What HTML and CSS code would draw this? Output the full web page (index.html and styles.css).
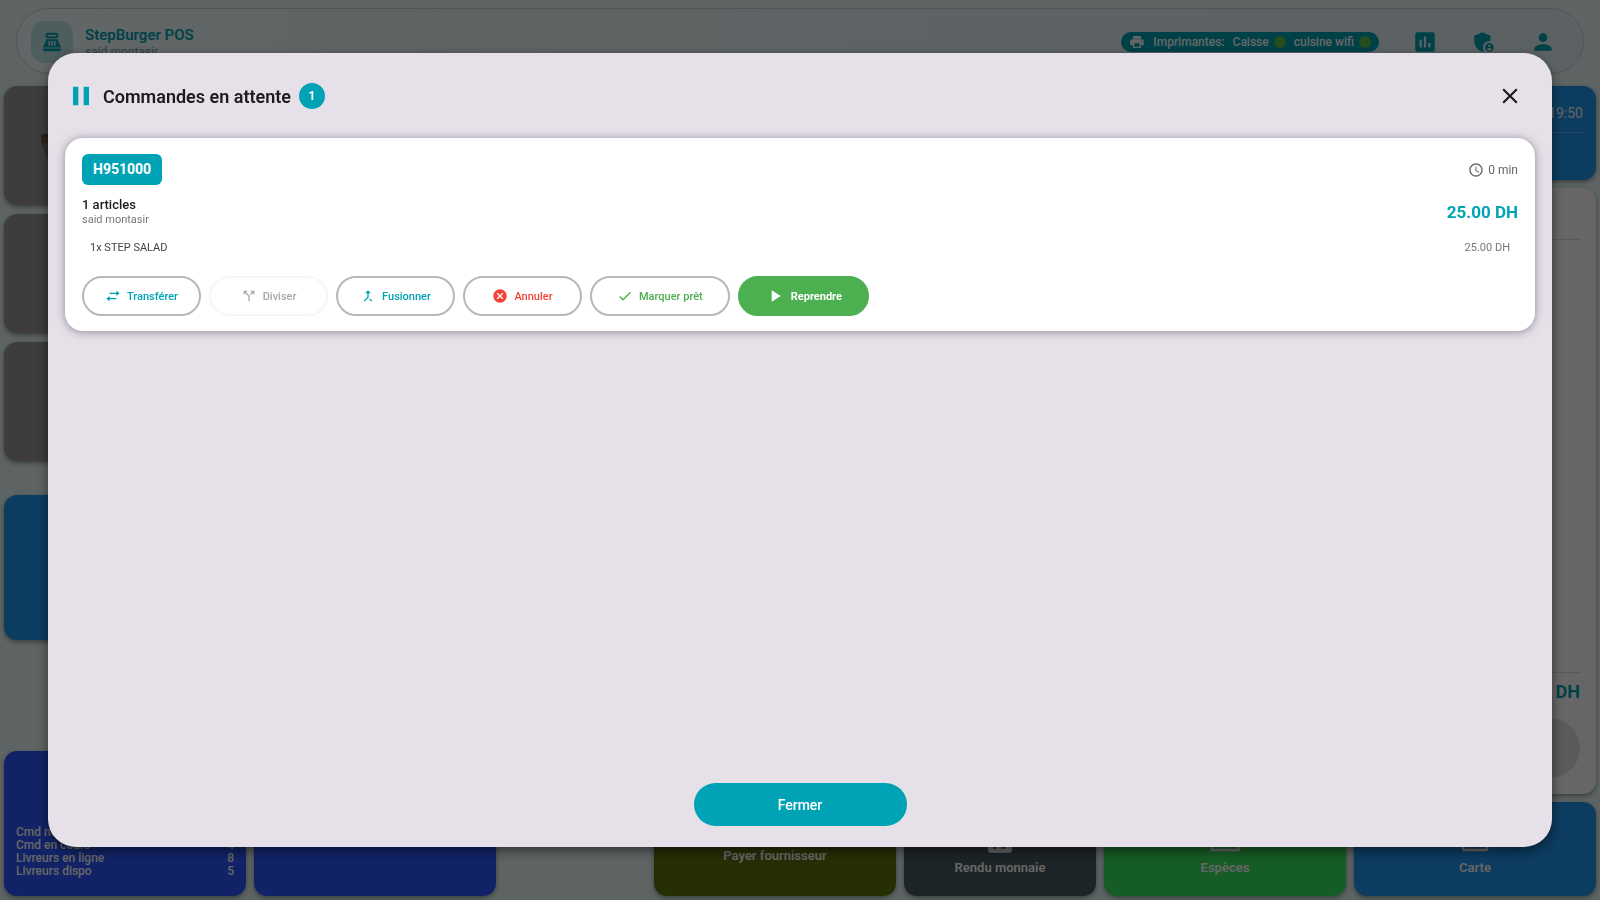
FILE: index.html
```html
<!DOCTYPE html>
<html lang="fr">
<head>
  <title>StepBurger POS</title>
  <meta charset="UTF-8"/>
  <meta name="viewport" content="width=device-width,initial-scale=1"/>
  <link rel="stylesheet" href="styles.css">
</head>
<body>
<div class="app">
  <header class="topbar">
    <div class="logo">
      <svg class="icon-22" viewBox="0 0 24 24"><path d="M17 2H7c-1.1 0-2 .9-2 2v2c0 1.1.9 2 2 2h10c1.1 0 2-.9 2-2V4c0-1.1-.9-2-2-2zm0 4H7V4h10v2zM20 22H4c-1.1 0-2-.9-2-2v-1h20v1c0 1.1-.9 2-2 2z"/><path fill-rule="evenodd" d="M18.53 10.19C18.21 9.47 17.49 9 16.7 9H7.3c-.79 0-1.51.47-1.83 1.19L2 18h20zM8 11h2v5H8zM11 11h2v5h-2zM14 11h2v5h-2z"/></svg>
    </div>
    <div class="brand">
      <span class="brand-name">StepBurger POS</span>
      <span class="brand-user">said montasir</span>
    </div>
    <div class="printers">
      <svg class="icon-16" viewBox="0 0 24 24"><path d="M19 8H5c-1.66 0-3 1.34-3 3v6h4v4h12v-4h4v-6c0-1.66-1.34-3-3-3zm-3 11H8v-5h8v5zm3-7c-.55 0-1-.45-1-1s.45-1 1-1 1 .45 1 1-.45 1-1 1zm-1-9H6v4h12V3z"/></svg>
      <span class="printers-label">Imprimantes:</span>
      <span class="printer">Caisse <i class="dot"></i></span>
      <span class="printer">cuisine wifi <i class="dot"></i></span>
    </div>
    <nav class="top-actions">
      <button type="button" class="icon-button" aria-label="Statistiques">
        <svg class="icon-26" viewBox="0 0 24 24"><path d="M19 3H5c-1.1 0-2 .9-2 2v14c0 1.1.9 2 2 2h14c1.1 0 2-.9 2-2V5c0-1.1-.9-2-2-2zM9 17H7v-7h2v7zm4 0h-2V7h2v10zm4 0h-2v-4h2v4z"/></svg>
      </button>
      <button type="button" class="icon-button" aria-label="Administration">
        <svg class="icon-26" viewBox="0 0 24 24"><path d="M17 11c.34 0 .67.04 1 .09V6.27L10.5 3 3 6.27v4.91c0 4.54 3.2 8.79 7.5 9.82.55-.13 1.08-.32 1.6-.55-.69-.98-1.1-2.17-1.1-3.45 0-3.31 2.69-6 6-6z"/><path d="M17 13c-2.21 0-4 1.79-4 4s1.79 4 4 4 4-1.79 4-4-1.79-4-4-4zm0 1.38c.62 0 1.12.51 1.12 1.12s-.51 1.12-1.12 1.12-1.12-.51-1.12-1.12.5-1.12 1.12-1.12zm0 5.37c-.93 0-1.74-.46-2.24-1.17.05-.72 1.51-1.08 2.24-1.08s2.19.36 2.24 1.08c-.5.71-1.31 1.17-2.24 1.17z"/></svg>
      </button>
      <button type="button" class="icon-button" aria-label="Compte">
        <svg class="icon-26" viewBox="0 0 24 24"><path d="M12 12c2.21 0 4-1.79 4-4s-1.79-4-4-4-4 1.79-4 4 1.79 4 4 4zm0 2c-2.67 0-8 1.34-8 4v2h16v-2c0-2.66-5.33-4-8-4z"/></svg>
      </button>
    </nav>
  </header>

  <main class="workspace">
    <section class="left">
      <div class="products">
        <div class="tile product">
          <svg class="product-art" viewBox="0 0 40 60"><path fill="#7a5a38" d="M0 0h30v9H0z"/><path fill="#4a5078" d="M3 0h4v4H3z"/><path fill="#747470" d="M0 9h30L12 40z"/></svg>
        </div>
        <div class="tile product"></div>
        <div class="tile product"></div>
      </div>
      <div class="tile category"></div>
      <div class="bottom-left">
        <div class="tile indigo stats">
          <dl>
            <div><dt>Cmd non</dt><dd>4</dd></div>
            <div><dt>Cmd en cours</dt><dd>4</dd></div>
            <div><dt>Livreurs en ligne</dt><dd>8</dd></div>
            <div><dt>Livreurs dispo</dt><dd>5</dd></div>
          </dl>
        </div>
        <div class="tile indigo"></div>
        <button type="button" class="tile olive">Payer fournisseur</button>
        <button type="button" class="tile slate action">
          <svg class="icon-32" viewBox="0 0 24 24"><path d="M5 3h14c1.1 0 2 .9 2 2v13c0 1.1-.9 2-2 2H5c-1.1 0-2-.9-2-2V5c0-1.1.9-2 2-2zm4 12H7v2h2zm7 0h-3v2h3z" fill-rule="evenodd"/></svg>
          Rendu monnaie
        </button>
      </div>
    </section>
    <section class="right">
      <div class="tile ticket-head"><time>19:50</time></div>
      <div class="tile ticket">
        <div class="ticket-top"></div>
        <div class="ticket-total">0.00 DH</div>
        <div class="ticket-action"></div>
      </div>
      <div class="payments">
        <button type="button" class="tile green action">
          <svg class="icon-32" viewBox="0 0 24 24"><path fill-rule="evenodd" d="M1 5h22v14H1zM3 7v10h18V7z"/></svg>
          Espèces
        </button>
        <button type="button" class="tile blue action">
          <svg class="icon-32" viewBox="0 0 24 24"><path fill-rule="evenodd" d="M4 4h16c1.1 0 2 .9 2 2v11c0 1.1-.9 2-2 2H4c-1.1 0-2-.9-2-2V6c0-1.1.9-2 2-2zm0 8v5h16v-5z"/></svg>
          Carte
        </button>
      </div>
    </section>
  </main>
</div>

<div class="overlay">
  <div class="dialog" role="dialog" aria-labelledby="dialog-title">
    <div class="dialog-header">
      <svg class="icon-32" viewBox="0 0 24 24"><path d="M6 19h4V5H6v14zm8-14v14h4V5h-4z"/></svg>
      <h1 id="dialog-title">Commandes en attente</h1>
      <span class="count">1</span>
      <button type="button" class="close" aria-label="Fermer">
        <svg class="icon-26" viewBox="0 0 24 24"><path d="M19 6.41L17.59 5 12 10.59 6.41 5 5 6.41 10.59 12 5 17.59 6.41 19 12 13.41 17.59 19 19 17.59 13.41 12z"/></svg>
      </button>
    </div>

    <article class="order">
      <div class="order-row">
        <span class="order-code">H951000</span>
        <span class="order-age">
          <svg class="icon-16" viewBox="0 0 24 24"><path d="M12 2C6.47 2 2 6.5 2 12s4.47 10 10 10 10-4.5 10-10S17.52 2 12 2zm0 18c-4.42 0-8-3.58-8-8s3.58-8 8-8 8 3.58 8 8-3.58 8-8 8zm.5-13H11v6l5.25 3.15.75-1.23-4.5-2.67z"/></svg>
          0 min
        </span>
      </div>
      <div class="order-row order-summary">
        <div>
          <div class="order-count">1 articles</div>
          <div class="order-user">said montasir</div>
        </div>
        <span class="order-total">25.00 DH</span>
      </div>
      <div class="order-row order-item">
        <span>1x STEP SALAD</span>
        <span class="item-price">25.00 DH</span>
      </div>
      <div class="order-actions">
        <button type="button" class="pill teal">
          <svg class="icon-16" viewBox="0 0 24 24"><path d="M22 8l-5-4v3H7v2h10v3zM2 16l5 4v-3h10v-2H7v-3z"/></svg>
          Transférer
        </button>
        <button type="button" class="pill" disabled>
          <svg class="icon-16" viewBox="0 0 24 24"><path d="M14 4l2.29 2.29-2.88 2.88 1.42 1.42 2.88-2.88L20 10V4zm-4 0H4v6l2.29-2.29 4.71 4.7V20h2v-8.41l-5.29-5.3z"/></svg>
          Diviser
        </button>
        <button type="button" class="pill teal">
          <svg class="icon-16" viewBox="0 0 24 24"><path d="M17 20.41L18.41 19 15 15.59 13.59 17 17 20.41zM7.5 8H11v5.59L5.59 19 7 20.41l6-6V8h3.5L12 3.5 7.5 8z"/></svg>
          Fusionner
        </button>
        <button type="button" class="pill red">
          <svg class="icon-16" viewBox="0 0 24 24"><path d="M12 2C6.47 2 2 6.47 2 12s4.47 10 10 10 10-4.47 10-10S17.53 2 12 2zm5 13.59L15.59 17 12 13.41 8.41 17 7 15.59 10.59 12 7 8.41 8.41 7 12 10.59 15.59 7 17 8.41 13.41 12 17 15.59z"/></svg>
          Annuler
        </button>
        <button type="button" class="pill wide ready">
          <svg class="icon-16" viewBox="0 0 24 24"><path d="M9 16.17L4.83 12l-1.42 1.41L9 19 21 7l-1.41-1.41z"/></svg>
          Marquer prêt
        </button>
        <button type="button" class="pill wide resume">
          <svg class="icon-20" viewBox="0 0 24 24"><path d="M8 5v14l11-7z"/></svg>
          Reprendre
        </button>
      </div>
    </article>

    <button type="button" class="dismiss">Fermer</button>
  </div>
</div>
</body>
</html>
```

FILE: styles.css
```css
* {
  box-sizing: border-box;
}

body {
  margin: 0;
  font-family: Roboto, "Liberation Sans", sans-serif;
  font-size: 12px;
  color: #1c1b1f;
  background: #ebfafa;
}

button {
  font-family: inherit;
  border: none;
  cursor: pointer;
}

svg {
  fill: currentColor;
  flex: none;
}

.icon-16 {
  width: 16px;
  height: 16px;
}

.icon-20 {
  width: 20px;
  height: 20px;
}

.icon-22 {
  width: 22px;
  height: 22px;
}

.icon-26 {
  width: 26px;
  height: 26px;
}

.icon-32 {
  width: 32px;
  height: 32px;
}

/* POS screen behind the dialog */

.app {
  display: flex;
  flex-direction: column;
  height: 100vh;
  padding: 8px 4px 4px;
  gap: 12px;
  overflow: hidden;
}

.topbar {
  display: flex;
  align-items: center;
  height: 66px;
  margin: 0 12px;
  padding: 1px 27px 0 14px;
  border: 1px solid #c8d2d4;
  border-radius: 33px;
  background: linear-gradient(90deg, #f5ffff, #ebf8fa 30%, #e6f3f7);
  color: #00a3b5;
}

.logo {
  display: flex;
  align-items: center;
  justify-content: center;
  width: 42px;
  height: 42px;
  border-radius: 14px;
  background: #c3e8ea;
}

.brand {
  display: flex;
  flex-direction: column;
  margin-left: 12px;
  padding-top: 2px;
}

.brand-name {
  font-size: 15px;
  line-height: 18px;
  font-weight: 600;
}

.brand-user {
  line-height: 16px;
  color: #7aa5aa;
}

.printers {
  display: flex;
  align-items: center;
  gap: 8px;
  height: 20px;
  margin-left: auto;
  padding: 0 8px;
  border-radius: 10px;
  background: #00a3b5;
  color: #fff;
  font-weight: 500;
}

.printer {
  display: flex;
  align-items: center;
  gap: 5px;
}

.dot {
  width: 12px;
  height: 12px;
  border-radius: 50%;
  background: #5fc04c;
}

.top-actions {
  display: flex;
  gap: 33px;
  margin-left: 33px;
}

.icon-button {
  display: flex;
  padding: 0;
  color: inherit;
  background: none;
}

.workspace {
  flex: 1;
  display: grid;
  grid-template-columns: 1092fr 492fr;
  gap: 8px;
  min-height: 0;
}

.tile {
  border-radius: 13px;
  box-shadow: 0 2px 5px rgba(0, 0, 0, .4);
  color: #fff;
}

.left {
  display: flex;
  flex-direction: column;
}

.products {
  display: flex;
  flex-direction: column;
  gap: 9px;
}

.product {
  height: 119px;
  padding: 48px 37px;
  background: #989898;
}

.product-art {
  width: 40px;
  height: 60px;
}

.category {
  height: 145px;
  margin-top: 34px;
  background: #1e96f0;
}

.bottom-left {
  display: grid;
  grid-template-columns: 242fr 242fr 142fr 242fr 192fr;
  gap: 8px;
  height: 145px;
  margin-top: auto;
}

.olive {
  grid-column: 4;
}

.slate {
  align-self: end;
  height: 94px;
}

.indigo {
  background: #2b58ff;
}

.olive {
  padding: 64px 0 0;
  background: #5f730c;
  font-size: 13px;
  font-weight: 600;
}

.slate {
  background: #485a62;
}

.green {
  background: #39e65f;
}

.blue {
  background: #1e96f0;
}

.stats {
  display: flex;
  align-items: flex-end;
  padding: 12px;
  padding-bottom: 18px;
}

.stats dl {
  flex: 1;
  margin: 0;
  font-weight: 500;
}

.stats dl div {
  display: flex;
  justify-content: space-between;
  line-height: 13px;
}

.stats dd {
  margin: 0;
}

.action {
  display: flex;
  flex-direction: column;
  align-items: center;
  justify-content: flex-end;
  gap: 2px;
  padding: 0 0 20px;
  font-size: 13px;
  line-height: 16px;
  font-weight: 600;
}

.right {
  display: flex;
  flex-direction: column;
  gap: 8px;
}

.ticket-head {
  height: 94px;
  padding: 18px 13px;
  background: #1e96f0;
  font-size: 14px;
  line-height: 18px;
  text-align: right;
}

.ticket-head time {
  display: block;
  padding-bottom: 10px;
  border-bottom: 1px solid #62b5f5;
}

.ticket {
  flex: 1;
  display: flex;
  flex-direction: column;
  padding: 0 16px 16px;
  background: #fff;
}

.ticket-top {
  height: 52px;
  border-bottom: 1px solid #dcdcdc;
}

.ticket-total {
  margin-top: auto;
  padding: 6px 0 14px;
  border-top: 1px solid #dcdcdc;
  font-size: 18px;
  line-height: 25px;
  font-weight: 700;
  text-align: right;
  color: #00a3b5;
}

.ticket-action {
  height: 60px;
  border-radius: 30px;
  background: #e0e0e0;
}

.payments {
  display: grid;
  grid-template-columns: 1fr 1fr;
  gap: 8px;
}

.payments .tile {
  height: 94px;
}

/* Held orders dialog */

.overlay {
  position: fixed;
  inset: 0;
  display: flex;
  padding: 53px 48px;
  background: rgba(0, 0, 0, .6);
}

.dialog {
  flex: 1;
  display: flex;
  flex-direction: column;
  padding: 21px 17px;
  border-radius: 28px;
  background: #e6e0e8;
  box-shadow: 0 4px 12px rgba(0, 0, 0, .5);
}

.dialog-header {
  display: flex;
  align-items: center;
  height: 44px;
  margin-bottom: 20px;
  color: #00a3b5;
}

.dialog-header h1 {
  margin: 0 8px 0 6px;
  font-size: 18px;
  font-weight: 600;
  color: #1c1b1f;
}

.count {
  width: 26px;
  border-radius: 13px;
  background: #00a3b5;
  color: #fff;
  font-weight: 700;
  line-height: 26px;
  text-align: center;
}

.close {
  display: flex;
  margin-left: auto;
  margin-right: 12px;
  padding: 0;
  background: none;
  color: #1c1b1f;
}

.order {
  padding: 16px 17px 15px;
  border-radius: 18px;
  background: #fff;
  box-shadow: 0 1px 8px rgba(60, 50, 80, .5);
}

.order-row {
  display: flex;
  align-items: center;
  justify-content: space-between;
}

.order-code {
  padding: 0 11px;
  border-radius: 6px;
  background: #00a3b5;
  color: #fff;
  font-size: 14px;
  line-height: 31px;
  font-weight: 700;
}

.order-age {
  display: flex;
  align-items: center;
  gap: 4px;
  color: #666;
}

.order-summary {
  margin-top: 12px;
}

.order-count {
  font-size: 13px;
  line-height: 16px;
  font-weight: 500;
}

.order-user {
  font-size: 11px;
  line-height: 13px;
  color: #777;
}

.order-total {
  font-size: 17px;
  font-weight: 700;
  color: #00a3b5;
}

.order-item {
  margin: 13px 8px 19px;
  font-size: 11px;
  line-height: 18px;
  color: #444;
}

.item-price {
  color: #777;
}

.order-actions {
  display: flex;
  flex-wrap: wrap;
  gap: 8px;
}

.pill {
  display: flex;
  align-items: center;
  justify-content: center;
  gap: 6px;
  min-width: 119px;
  height: 40px;
  padding: 0 16px;
  border: 2px solid #b8b8b8;
  border-radius: 20px;
  background: #fff;
  font-size: 11px;
  font-weight: 500;
}

.pill.wide {
  padding: 0 25px;
}

.pill:disabled {
  border-color: #f6f6f6;
  color: #a8a8a8;
}

.teal {
  color: #00a3b5;
}

.red {
  color: #f44336;
}

.ready {
  color: #4caf50;
}

.resume {
  border-color: #4caf50;
  background: #4caf50;
  color: #fff;
  font-weight: 700;
}

.dismiss {
  align-self: center;
  width: 213px;
  height: 43px;
  margin-top: auto;
  border-radius: 22px;
  background: #00a3b5;
  color: #fff;
  font-size: 14px;
  font-weight: 500;
}
```
